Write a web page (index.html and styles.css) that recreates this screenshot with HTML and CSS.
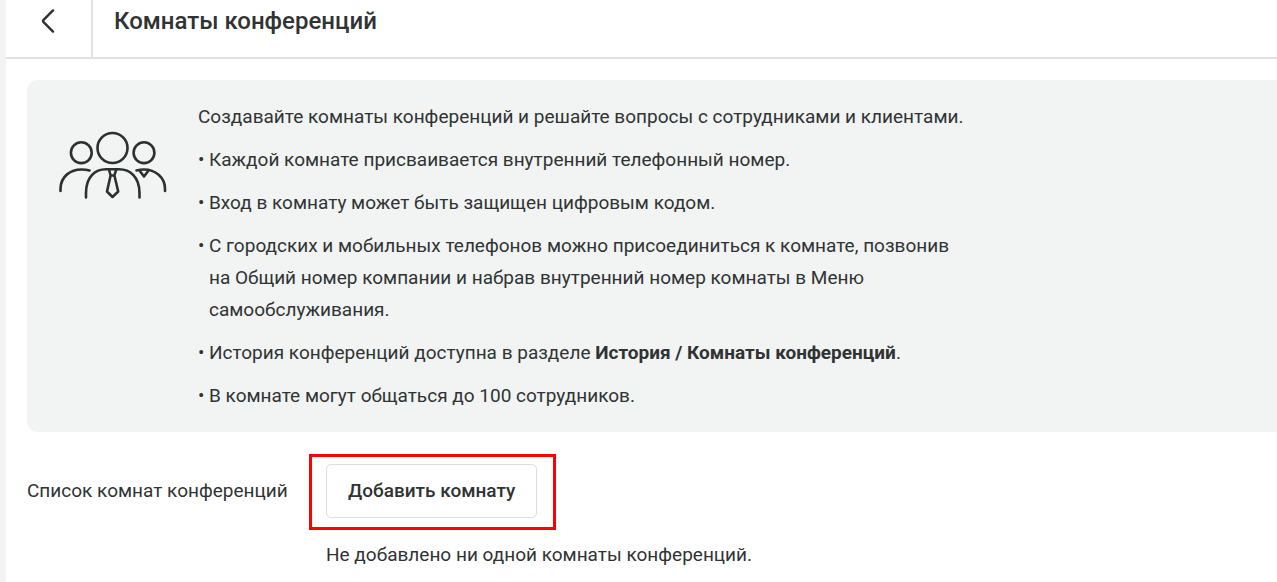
FILE: index.html
```
<!DOCTYPE html>
<html lang="ru">
<head>
<meta charset="UTF-8">
<title>Комнаты конференций</title>
<link rel="stylesheet" href="styles.css">
</head>
<body>
<header class="header">
	<a class="back" href="#" aria-label="Назад">
		<svg width="16" height="26" viewBox="0 0 16 26" fill="none" stroke="#2d3030" stroke-width="2.4" stroke-linecap="round" stroke-linejoin="round"><path d="M12 2.4 2.6 11.8Q1.5 13 2.6 14.2L12 23.6"/></svg>
	</a>
	<h1>Комнаты конференций</h1>
</header>
<main>
	<section class="info">
		<svg class="people" width="108" height="70" viewBox="0 0 108 70" fill="none" stroke="#2d3030" stroke-width="2.6" stroke-linecap="round" stroke-linejoin="round">
			<circle cx="22.3" cy="21.7" r="10.4"/>
			<circle cx="53.5" cy="17" r="15"/>
			<circle cx="85" cy="21.7" r="10.4"/>
			<path d="M1.5 60V58C1.5 45 12 38.5 22.5 38.5Q27 38.5 30.5 39.5"/>
			<path d="M27 66.5V62C27 46 36 38.3 47 38.3H60C71 38.3 80.5 46 80.5 62V66.5"/>
			<path d="M50 38.5 51.6 44.5H55.4L57.2 38.5M51.6 44.5 48 60.5 53.5 66 59.2 60.5 55.4 44.5"/>
			<path d="M77.5 39.5Q81 38.5 85 38.5C96 38.5 106 46 106 58V60M80.5 39.5 85 45.5 89.5 39.5"/>
		</svg>
		<div class="info_text">
			<p>Создавайте комнаты конференций и решайте вопросы с сотрудниками и клиентами.</p>
			<ul>
				<li>Каждой комнате присваивается внутренний телефонный номер.</li>
				<li>Вход в комнату может быть защищен цифровым кодом.</li>
				<li>С городских и мобильных телефонов можно присоединиться к комнате, позвонив на Общий номер компании и набрав внутренний номер комнаты в Меню самообслуживания.</li>
				<li>История конференций доступна в разделе <b>История / Комнаты конференций</b>.</li>
				<li>В комнате могут общаться до 100 сотрудников.</li>
			</ul>
		</div>
	</section>
	<section class="rooms">
		<h2 class="rooms_label">Список комнат конференций</h2>
		<div>
			<div class="marked">
				<button type="button">Добавить комнату</button>
			</div>
			<p class="empty">Не добавлено ни одной комнаты конференций.</p>
		</div>
	</section>
</main>
</body>
</html>
```
FILE: styles.css
```
body{
	min-height: 100vh;
	margin: 0;
	border-left: 6px solid #f1f4f3;
	background: #fff;
	color: #303333;
	font: 19px/32px Roboto, sans-serif;
}

h1, h2, p, ul{
	margin: 0;
	padding: 0;
}

.header{
	display: flex;
	border-bottom: 2px solid #e1e1e1;
}

.header h1{
	padding: 0 0 15px 21px;
	font-size: 24px;
	font-weight: 500;
	line-height: 42px;
}

.back{
	display: flex;
	justify-content: center;
	width: 85px;
	padding-top: 8px;
	border-right: 2px solid #e1e1e1;
}

main{
	padding: 21px 0 0 21px;
}

/* info panel */
.info{
	display: flex;
	gap: 31px;
	padding: 21px 32px 20px;
	background: #f1f4f3;
	border-radius: 11px 0 0 11px;
}

.people{
	flex: none;
	margin-top: 30px;
}

.info_text{
	max-width: 770px;
}

.info ul{
	list-style: none;
}

.info li{
	position: relative;
	margin-top: 11px;
	padding-left: 11px;
}

.info li::before{
	content: "•";
	position: absolute;
	left: 0;
}

.info b{
	font-weight: 700;
}

/* rooms */
.rooms{
	display: grid;
	grid-template-columns: 299px 1fr;
	padding-top: 32px;
}

.rooms_label{
	padding-top: 11px;
	font-size: 19px;
	font-weight: 400;
}

.marked{
	position: relative;
	width: fit-content;
}

.marked::after{
	content: "";
	position: absolute;
	inset: -10px -19px -12px -17px;
	border: 3px solid #f00;
	pointer-events: none;
}

button{
	display: block;
	padding: 10px 21px;
	border: 1px solid #dcdfde;
	border-radius: 5px;
	background: #fff;
	color: inherit;
	font: 500 19px/32px Roboto, sans-serif;
}

.empty{
	padding-top: 21px;
}
```
